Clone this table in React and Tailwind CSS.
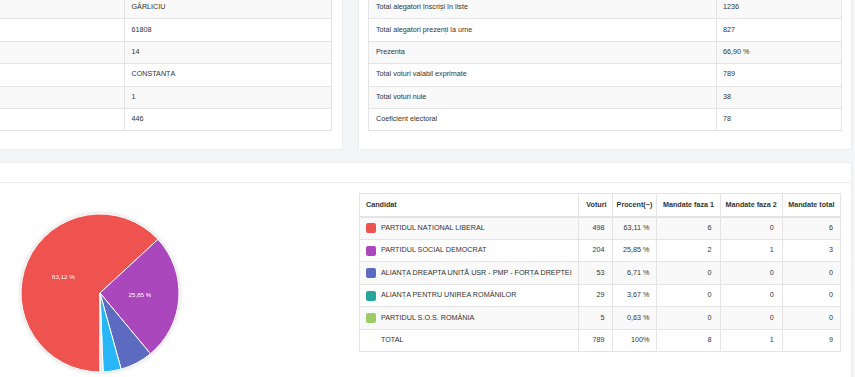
import React from 'react';

const localInfo = ['GÂRLICIU', '61808', '14', 'CONSTANȚA', '1', '446'];

const stats = [
  ['Total alegatori înscriși în liste', '1236'],
  ['Total alegatori prezenți la urne', '827'],
  ['Prezenta', '66,90 %'],
  ['Total voturi valabil exprimate', '789'],
  ['Total voturi nule', '38'],
  ['Coeficient electoral', '78'],
];

const parties = [
  { name: 'PARTIDUL NAȚIONAL LIBERAL', votes: 498, pct: '63,11 %', m1: 6, m2: 0, mt: 6, swatch: 'bg-[#ef5350]', color: '#ef5350', label: '63,12 %' },
  { name: 'PARTIDUL SOCIAL DEMOCRAT', votes: 204, pct: '25,85 %', m1: 2, m2: 1, mt: 3, swatch: 'bg-[#ab47bc]', color: '#ab47bc', label: '25,85 %' },
  { name: 'ALIANȚA DREAPTA UNITĂ USR - PMP - FORȚA DREPTEI', votes: 53, pct: '6,71 %', m1: 0, m2: 0, mt: 0, swatch: 'bg-[#5c6bc0]', color: '#5c6bc0' },
  { name: 'ALIANȚA PENTRU UNIREA ROMÂNILOR', votes: 29, pct: '3,67 %', m1: 0, m2: 0, mt: 0, swatch: 'bg-[#26a69a]', color: '#29b6f6' },
  { name: 'PARTIDUL S.O.S. ROMÂNIA', votes: 5, pct: '0,63 %', m1: 0, m2: 0, mt: 0, swatch: 'bg-[#9ccc65]', color: '#e8e8e8' },
];

function PieChart() {
  const total = parties.reduce((s, p) => s + p.votes, 0);
  const cx = 100, cy = 100, r = 79;
  const pt = (deg, rad) => {
    const a = (deg * Math.PI) / 180;
    return [cx + rad * Math.sin(a), cy - rad * Math.cos(a)];
  };
  let start = 180;
  const slices = parties.map((p) => {
    const sweep = (p.votes / total) * 360;
    const end = start + sweep;
    const [x1, y1] = pt(start, r);
    const [x2, y2] = pt(end, r);
    const large = sweep > 180 ? 1 : 0;
    const d = `M${cx},${cy} L${x1},${y1} A${r},${r} 0 ${large} 1 ${x2},${y2} Z`;
    const [lx, ly] = pt(start + sweep / 2, 40);
    start = end;
    return { d, color: p.color, lx, ly, label: p.label };
  });

  return (
    <svg width="200" height="200" viewBox="0 0 200 200" className="drop-shadow-[0_0_2px_rgba(0,0,0,0.18)]">
      {slices.map((s, i) => (
        <path key={i} d={s.d} fill={s.color} stroke="#ffffff" strokeWidth="1" />
      ))}
      {slices.filter((s) => s.label).map((s, i) => (
        <text
          key={i}
          x={s.lx}
          y={s.ly}
          fill="#ffffff"
          fontSize="6.2"
          textAnchor="middle"
          dominantBaseline="middle"
          fontFamily="'Liberation Sans', Arial, sans-serif"
        >
          {s.label}
        </text>
      ))}
    </svg>
  );
}

export default function App() {
  return (
    <div className="w-[855px] h-[377px] overflow-hidden bg-[#f4f5f7] pr-[3px] font-['Liberation_Sans',Arial,sans-serif] text-[7.2px] text-[#333]">
      {/* top row: locality info + turnout stats */}
      <div className="flex gap-[15px] -mt-[4px]">
        <div className="w-[343px] flex-none bg-white border-r border-b border-[#ececec] pr-[10px] pb-[18px]">
          <table className="w-full table-fixed border-collapse border-r border-b border-[#e4e4e4]">
            <colgroup>
              <col className="w-[124px]" />
              <col />
            </colgroup>
            <tbody>
              {localInfo.map((v, i) => (
                <tr key={i} className={`h-[22.4px] ${i % 2 === 0 ? 'bg-[#f9f9f9]' : 'bg-white'}`}>
                  <td className="border-t border-r border-[#e4e4e4] px-[7px]"></td>
                  <td className="border-t border-[#e4e4e4] px-[7px]">{v}</td>
                </tr>
              ))}
            </tbody>
          </table>
        </div>

        <div className="flex-1 bg-white border-x border-b border-[#ececec] px-[9px] pb-[18px]">
          <table className="w-full table-fixed border-collapse border-x border-b border-[#e4e4e4]">
            <colgroup>
              <col className="w-[348px]" />
              <col />
            </colgroup>
            <tbody>
              {stats.map(([label, value], i) => (
                <tr key={i} className={`h-[22.4px] ${i % 2 === 0 ? 'bg-[#f9f9f9]' : 'bg-white'}`}>
                  <td className="border-t border-r border-[#e4e4e4] px-[7px]">{label}</td>
                  <td className="border-t border-[#e4e4e4] px-[6px]">{value}</td>
                </tr>
              ))}
            </tbody>
          </table>
        </div>
      </div>

      {/* results card */}
      <div className="mt-[12px] bg-white border-r border-t border-[#ececec] h-[260px]">
        <div className="h-[20px] border-b border-[#ececec]"></div>
        <div className="flex items-start pt-[10px] pr-[10px]">
          <div className="w-[359px] flex-none">
            <PieChart />
          </div>
          <table className="flex-1 table-fixed border-collapse border border-[#e4e4e4]">
            <colgroup>
              <col className="w-[217px]" />
              <col className="w-[36px]" />
              <col className="w-[45px]" />
              <col className="w-[64px]" />
              <col className="w-[62px]" />
              <col className="w-[59px]" />
            </colgroup>
            <thead>
              <tr className="h-[23px] font-bold whitespace-nowrap">
                <th className="border-r border-b-2 border-[#e4e4e4] px-[6px] text-left">Candidat</th>
                <th className="border-r border-b-2 border-[#e4e4e4] px-[5px] text-right">Voturi</th>
                <th className="border-r border-b-2 border-[#e4e4e4] px-[4px] text-center">Procent(~)</th>
                <th className="border-r border-b-2 border-[#e4e4e4] px-[5px] text-center">Mandate faza 1</th>
                <th className="border-r border-b-2 border-[#e4e4e4] px-[5px] text-center">Mandate faza 2</th>
                <th className="border-b-2 border-[#e4e4e4] px-[5px] text-center">Mandate total</th>
              </tr>
            </thead>
            <tbody>
              {parties.map((p, i) => (
                <tr key={p.name} className={`h-[22.5px] ${i % 2 === 0 ? 'bg-[#f9f9f9]' : 'bg-white'}`}>
                  <td className="border-t border-r border-[#e4e4e4] px-[6px]">
                    <div className="flex items-center gap-[5px] whitespace-nowrap">
                      <span className={`w-[10px] h-[10px] rounded-[2px] flex-none ${p.swatch}`}></span>
                      <span>{p.name}</span>
                    </div>
                  </td>
                  <td className="border-t border-r border-[#e4e4e4] px-[7px] text-right">{p.votes}</td>
                  <td className="border-t border-r border-[#e4e4e4] px-[7px] text-right">{p.pct}</td>
                  <td className="border-t border-r border-[#e4e4e4] px-[8px] text-right">{p.m1}</td>
                  <td className="border-t border-r border-[#e4e4e4] px-[8px] text-right">{p.m2}</td>
                  <td className="border-t border-[#e4e4e4] px-[7px] text-right">{p.mt}</td>
                </tr>
              ))}
              <tr className="h-[22.5px] bg-white">
                <td className="border-t border-r border-[#e4e4e4] pl-[21px]">TOTAL</td>
                <td className="border-t border-r border-[#e4e4e4] px-[7px] text-right">789</td>
                <td className="border-t border-r border-[#e4e4e4] px-[7px] text-right">100%</td>
                <td className="border-t border-r border-[#e4e4e4] px-[8px] text-right">8</td>
                <td className="border-t border-r border-[#e4e4e4] px-[8px] text-right">1</td>
                <td className="border-t border-[#e4e4e4] px-[7px] text-right">9</td>
              </tr>
            </tbody>
          </table>
        </div>
      </div>
    </div>
  );
}
